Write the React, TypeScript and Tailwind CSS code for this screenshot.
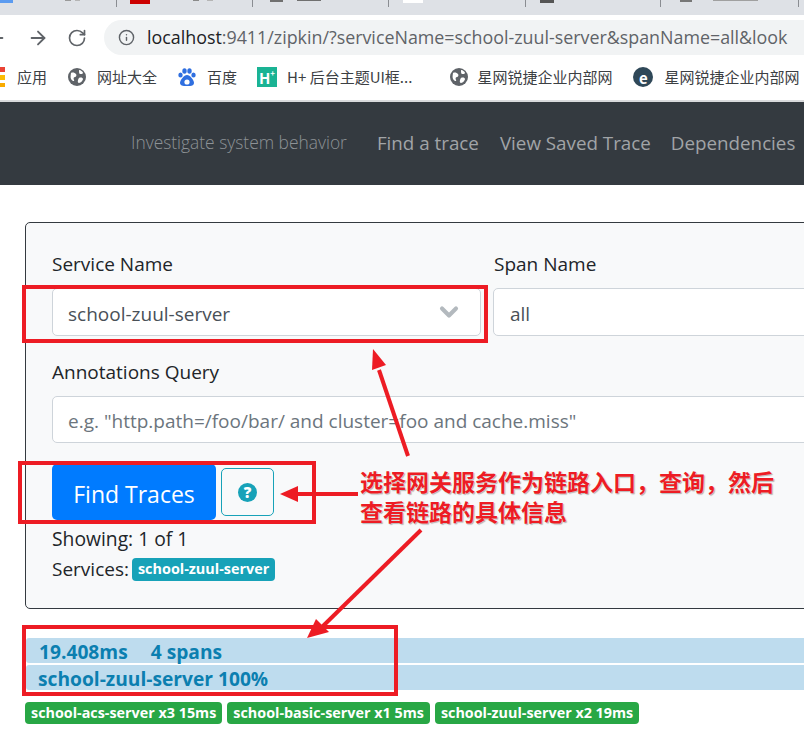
import { ArrowLeft, ArrowRight, ChevronDown, Info, RotateCw } from 'lucide-react';

const TAB_SEPARATORS = [116, 252, 388, 525, 660, 798];

// bottoms of the tab icons and titles that stick out of the cropped strip
const TAB_BITS = [
  { left: 0, width: 13, height: 3, color: '#5b9bf0' },
  { left: 65, width: 6, height: 1, color: '#9a9a9a' },
  { left: 75, width: 5, height: 1, color: '#b5b5b5' },
  { left: 193, width: 6, height: 1, color: '#8a8a8a' },
  { left: 207, width: 6, height: 1, color: '#b5b5b5' },
  { left: 130, width: 20, height: 4, color: '#cc0000' },
  { left: 270, width: 13, height: 2, color: '#707070' },
  { left: 297, width: 24, height: 1, color: '#707070' },
  { left: 403, width: 20, height: 3, color: '#ffffff' },
  { left: 540, width: 14, height: 3, color: '#555555' },
  { left: 680, width: 12, height: 2, color: '#777777' },
  { left: 713, width: 45, height: 1, color: '#a0a0a0' },
];

const SPANS = ['school-acs-server x3 15ms', 'school-basic-server x1 5ms', 'school-zuul-server x2 19ms'];

function GlobeIcon() {
  return (
    <svg width="18" height="18" viewBox="0 0 18 18" className="shrink-0">
      <circle cx="9" cy="9" r="9" fill="#5f6368" />
      <path d="M3 5c2-1 4 0 5 1s0 3-1 3-2 1-1 3-2 1-3-1 0-5 0-6z" fill="#fff" />
      <path d="M11 2c2 0 4 2 4 3s-2 1-3 1-1-3-1-4zM11 10c2-1 4 0 4 1s-2 4-4 4-1-4 0-5z" fill="#fff" />
    </svg>
  );
}

function BaiduIcon() {
  return (
    <svg width="18" height="20" viewBox="0 0 18 20" className="shrink-0">
      <ellipse cx="2.5" cy="8" rx="2.2" ry="2.6" fill="#2f6fe0" />
      <ellipse cx="6.5" cy="4" rx="2.2" ry="2.8" fill="#2f6fe0" />
      <ellipse cx="11.5" cy="4" rx="2.2" ry="2.8" fill="#2f6fe0" />
      <ellipse cx="15.5" cy="8" rx="2.2" ry="2.6" fill="#2f6fe0" />
      <path d="M9 8c-3 0-7 5-7 8 0 2 2 3 4 3h6c2 0 4-1 4-3 0-3-4-8-7-8z" fill="#2f6fe0" />
      <circle cx="9" cy="15" r="2.6" fill="#fff" />
    </svg>
  );
}

function Browser() {
  return (
    <div className="text-[#3c4043]">
      {/* Tab strip */}
      <div className="h-[15px] bg-[#dee1e6] relative overflow-hidden">
        {TAB_SEPARATORS.map((x) => (
          <div key={x} className="absolute top-0 w-px h-[7px] bg-[#8a8d92]" style={{ left: x }} />
        ))}
        {TAB_BITS.map((b) => (
          <div
            key={b.left}
            className="absolute top-0"
            style={{ left: b.left, width: b.width, height: b.height, backgroundColor: b.color }}
          />
        ))}
      </div>

      {/* Toolbar */}
      <div className="h-[40px] bg-white flex items-center pt-[5px]">
        <ArrowLeft size={22} className="text-[#5f6368] -ml-[15px]" />
        <ArrowRight size={22} className="text-[#5f6368] ml-[20px]" />
        <RotateCw size={20} className="text-[#5f6368] ml-[18px]" />
        <div className="ml-[17px] flex-1 h-[35px] bg-[#f1f3f4] rounded-l-full flex items-center pl-[14px] overflow-hidden">
          <Info size={17} className="text-[#5f6368] shrink-0" />
          <span className="ml-[12px] text-[17.85px] text-[#5f6368] whitespace-nowrap">
            <span className="text-[#202124]">localhost</span>:9411/zipkin/?serviceName=school-zuul-server&amp;spanName=all&amp;look
          </span>
        </div>
      </div>

      {/* Bookmarks bar */}
      <div className="h-[45px] bg-white flex items-center pb-[1px] text-[15px] whitespace-nowrap font-['Noto_Sans_CJK_SC',sans-serif]">
        <div className="w-[5px] flex flex-col gap-[3px]">
          <div className="h-[5px] bg-[#ea4335]" />
          <div className="h-[5px] bg-[#fbbc04]" />
          <div className="h-[4px] bg-[#f9ab00]" />
        </div>
        <span className="ml-[12px]">应用</span>
        <div className="ml-[21px] flex items-center gap-[11px]">
          <GlobeIcon />
          <span>网址大全</span>
        </div>
        <div className="ml-[21px] flex items-center gap-[11px]">
          <BaiduIcon />
          <span>百度</span>
        </div>
        <div className="ml-[20px] flex items-center gap-[10px]">
          <div className="w-5 h-5 bg-[#1ab394] flex items-center justify-center text-white text-[15px] font-bold leading-none">
            H<span className="text-[8px] -mt-2">+</span>
          </div>
          <span>H+ 后台主题UI框...</span>
        </div>
        <div className="ml-[38px] flex items-center gap-[9px]">
          <GlobeIcon />
          <span>星网锐捷企业内部网</span>
        </div>
        <div className="ml-[21px] flex items-center gap-[11px]">
          <div className="w-5 h-5 rounded-full bg-[#2f4858] flex items-center justify-center text-white text-[15px] font-bold leading-none">
            e
          </div>
          <span>星网锐捷企业内部网</span>
        </div>
      </div>
      <div className="h-[2px] bg-[#d9dadc]" />
    </div>
  );
}

function Annotations() {
  const red = '#ed1c24';
  return (
    <>
      <div className="absolute left-[22px] top-[285px] w-[466px] h-[58px] border-[4px] border-[#ed1c24]" />
      <div className="absolute left-[18px] top-[461px] w-[298px] h-[63px] border-[4px] border-[#ed1c24]" />
      <div className="absolute left-[22px] top-[625px] w-[376px] h-[71px] border-[4px] border-[#ed1c24]" />
      <svg className="absolute left-0 top-0" width="804" height="737">
        <line x1="408" y1="456" x2="379" y2="370" stroke={red} strokeWidth="4" />
        <polygon points="373,349 386,365 372,370" fill={red} />
        <line x1="358" y1="494" x2="298" y2="494" stroke={red} strokeWidth="4" />
        <polygon points="280,494 298,486 298,502" fill={red} />
        <line x1="421" y1="530" x2="322" y2="627" stroke={red} strokeWidth="4" />
        <polygon points="307,638 316,619 329,632" fill={red} />
      </svg>
      <div className="absolute left-[360px] top-[467px] flex flex-col gap-[2px] text-[23px] leading-[28px] font-bold text-[#ed1c24] font-['Noto_Sans_CJK_SC',sans-serif] [text-shadow:0_0_2px_#ffffff,1px_1px_1px_#a0a0a0] whitespace-nowrap">
        <div>选择网关服务作为链路入口，查询，然后</div>
        <div>查看链路的具体信息</div>
      </div>
    </>
  );
}

export default function App() {
  return (
    <div className="relative w-[804px] h-[737px] overflow-hidden bg-white font-['Open_Sans',sans-serif] text-[#212529]">
      <Browser />

      {/* Navbar */}
      <div className="h-[83px] bg-[#343a40] flex items-center whitespace-nowrap">
        <span className="ml-[131px] text-[17.4px] font-light text-[#8d9296] -mt-[3px]">Investigate system behavior</span>
        <span className="ml-[30px] text-[18.8px] text-[#a1a4a7]">Find a trace</span>
        <span className="ml-[21px] text-[18.8px] text-[#a1a4a7]">View Saved Trace</span>
        <span className="ml-[20px] text-[18.8px] text-[#a1a4a7]">Dependencies</span>
      </div>

      {/* Search card */}
      <div className="mt-[37px] ml-[25px] w-[1000px] h-[387px] bg-[#f8f9fa] border border-[#343a40] rounded-[5px] px-[26px] pt-[28px] text-[19px]">
        <div className="flex gap-[12px]">
          <div className="w-[429px]">
            <div className="leading-[27px]">Service Name</div>
            <div className="mt-[10px] h-[48px] bg-white border border-[#ced4da] rounded-[5px] flex items-center justify-between pl-[15px] pr-[17px] text-[#495057]">
              <span className="pt-[4px]">school-zuul-server</span>
              <ChevronDown size={28} strokeWidth={3.5} className="text-[#b3b9be]" />
            </div>
          </div>
          <div className="w-[429px]">
            <div className="leading-[27px] pl-px">Span Name</div>
            <div className="mt-[10px] h-[48px] bg-white border border-[#ced4da] rounded-[5px] flex items-center pl-[16px] pt-[4px] text-[#495057]">
              all
            </div>
          </div>
        </div>

        <div className="mt-[23px] leading-[27px]">Annotations Query</div>
        <div className="mt-[10px] h-[47px] bg-white border border-[#ced4da] rounded-[5px] flex items-center pl-[15px] pt-[3px] text-[#6c757d] whitespace-nowrap">
          e.g. "http.path=/foo/bar/ and cluster=foo and cache.miss"
        </div>

        <div className="mt-[21px] flex items-center">
          <button className="w-[164px] h-[56px] bg-[#007bff] rounded-[5px] text-white text-[23px] pt-[5px]">Find Traces</button>
          <button className="ml-[5px] w-[53px] h-[48px] border border-[#17a2b8] rounded-[5px] flex items-center justify-center">
            <span className="w-[19px] h-[19px] rounded-full bg-[#17a2b8] text-white text-[15px] font-extrabold leading-none flex items-center justify-center">
              ?
            </span>
          </button>
        </div>

        <div className="mt-[4px] leading-[30px] text-[19.3px]">Showing: 1 of 1</div>
        <div className="leading-[30px] flex items-center">
          Services:
          <span className="ml-[3px] h-[23px] px-[6px] rounded-[4px] bg-[#17a2b8] text-white text-[14.4px] font-bold flex items-center">
            school-zuul-server
          </span>
        </div>
      </div>

      {/* Trace result */}
      <div className="mt-[29px] ml-[26px] text-[#0b7fb0] font-bold text-[19.2px]">
        <div className="h-[25px] bg-[#bedcee] rounded-l-[3px] flex items-center pl-[13px] pt-[3px]">
          <span>19.408ms</span>
          <span className="ml-[23px]">4 spans</span>
        </div>
        <div className="mt-[2px] h-[25px] bg-[#bedcee] rounded-l-[3px] flex items-center pl-[12px] pt-[3px]">
          school-zuul-server 100%
        </div>
      </div>

      <div className="mt-[12px] ml-[25px] flex gap-[5px]">
        {SPANS.map((s) => (
          <span key={s} className="h-[22px] px-[6px] rounded-[4px] bg-[#28a745] text-white text-[14.35px] font-bold flex items-center whitespace-nowrap">
            {s}
          </span>
        ))}
      </div>

      <Annotations />
    </div>
  );
}
